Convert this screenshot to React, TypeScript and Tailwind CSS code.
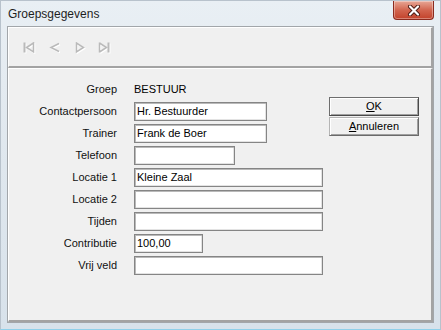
import React from "react"

const rows: { label: string; value?: string; width?: string; plain?: boolean }[] = [
  { label: "Groep", value: "BESTUUR", plain: true },
  { label: "Contactpersoon", value: "Hr. Bestuurder", width: "w-[133px]" },
  { label: "Trainer", value: "Frank de Boer", width: "w-[133px]" },
  { label: "Telefoon", value: "", width: "w-[101px]" },
  { label: "Locatie 1", value: "Kleine Zaal", width: "w-[189px]" },
  { label: "Locatie 2", value: "", width: "w-[189px]" },
  { label: "Tijden", value: "", width: "w-[189px]" },
  { label: "Contributie", value: "100,00", width: "w-[69px]" },
  { label: "Vrij veld", value: "", width: "w-[189px]" },
]

function NavIcon({ kind }: { kind: "first" | "prev" | "next" | "last" }) {
  const shape = (c: string, o: number) => {
    const t = `translate(${o} ${o})`
    if (kind === "first")
      return (
        <g transform={t} stroke={c} fill="none" strokeWidth="1.5">
          <path d="M1.5 0.5 V10.5" strokeWidth="2" />
          <path d="M10.5 1 L3.5 5.5 L10.5 10 Z" />
        </g>
      )
    if (kind === "prev")
      return (
        <g transform={t} stroke={c} fill="none" strokeWidth="1.5">
          <path d="M10 1.5 L2 5.5 L10 9.5" />
        </g>
      )
    if (kind === "next")
      return (
        <g transform={t} stroke={c} fill="none" strokeWidth="1.5">
          <path d="M1.5 1 V10 L8.5 5.5 Z" />
        </g>
      )
    return (
      <g transform={t} stroke={c} fill="none" strokeWidth="1.5">
        <path d="M1.5 0.5 V10.5 M1.5 1 L8.5 5.5 L1.5 10" />
        <path d="M10.5 0.5 V10.5" strokeWidth="2" />
      </g>
    )
  }
  return (
    <svg width="13" height="12" viewBox="0 0 13 12">
      {shape("#ffffff", 1)}
      {shape("#bababa", 0)}
    </svg>
  )
}

export default function App() {
  return (
    <div
      className="relative flex h-[330px] w-[441px] flex-col overflow-hidden border border-[#b8c2cc] border-b-[#8fd0ea] bg-gradient-to-b from-[#e9eff4] via-[#dfe7ee] to-[#d8e2eb] text-black"
      style={{ fontFamily: '"Liberation Sans", Arial, sans-serif' }}
    >
      {/* title bar */}
      <div className="flex h-[25px] shrink-0 items-start justify-between pl-[7px]">
        <span className="mt-[5px] text-[12px] leading-[16px] text-[#1e1e1e]">Groepsgegevens</span>
        <div className="mr-[6px] flex h-[19px] w-[41px] items-center justify-center rounded-b-[4px] border border-t-0 border-[#8b2b1e] bg-gradient-to-b from-[#e7a796] via-[#d2654f] to-[#c2412a] shadow-[inset_0_0_0_1px_rgba(255,255,255,0.35)]">
          <svg width="14" height="11" viewBox="0 0 14 11">
            <path d="M3 1.5 L11 9.5 M11 1.5 L3 9.5" stroke="#4a1a12" strokeWidth="4" strokeLinecap="round" />
            <path d="M3 1.5 L11 9.5 M11 1.5 L3 9.5" stroke="#ffffff" strokeWidth="2.2" strokeLinecap="round" />
          </svg>
        </div>
      </div>

      {/* client area */}
      <div className="mx-[6px] flex h-[297px] flex-col border border-[#a2a6aa] bg-[#f0f0f0] text-[11px]">
        {/* toolbar */}
        <div className="flex h-[41px] shrink-0 items-center border-l border-t border-white border-b-2 border-r-2 border-b-[#a3a3a3] border-r-[#a3a3a3] pl-[14px] pt-[2px]">
          <div className="flex w-[13px] justify-center"><NavIcon kind="first" /></div>
          <div className="ml-[13px] flex w-[13px] justify-center"><NavIcon kind="prev" /></div>
          <div className="ml-[13px] flex w-[13px] justify-center"><NavIcon kind="next" /></div>
          <div className="ml-[10px] flex w-[13px] justify-center"><NavIcon kind="last" /></div>
        </div>

        {/* body */}
        <div className="flex flex-1 items-start border-l border-t border-white border-b-2 border-r-2 border-b-[#a3a3a3] border-r-[#a3a3a3] pt-[11px]">
          <div className="grid grid-cols-[108px_189px] gap-x-[17px] gap-y-[3px]">
            {rows.map((r) => (
              <React.Fragment key={r.label}>
                <div className="flex h-[19px] items-center justify-end leading-[13px] text-[#111]">{r.label}</div>
                {r.plain ? (
                  <div className="flex h-[19px] items-center leading-[13px]">{r.value}</div>
                ) : (
                  <div
                    className={`flex h-[19px] items-center border border-[#858585] bg-white pl-[2px] leading-[13px] shadow-[inset_1px_1px_0_#b9b9b9,inset_-1px_-1px_0_#e3e3e3] ${r.width}`}
                  >
                    {r.value}
                  </div>
                )}
              </React.Fragment>
            ))}
          </div>

          <div className="ml-[6px] mt-[17px] flex w-[90px] flex-col gap-[1px]">
            <div className="flex h-[19px] items-center justify-center border border-[#6e6e6e] border-b-[#4a4a4a] border-r-[#4a4a4a] bg-[#f0f0f0] shadow-[inset_1px_1px_0_#ffffff,inset_-1px_-1px_0_#a0a0a0] leading-[13px]">
              <span><span className="underline">O</span>K</span>
            </div>
            <div className="flex h-[19px] items-center justify-center border border-[#b5b5b5] border-b-[#6a6a6a] border-r-[#6a6a6a] bg-[#f0f0f0] shadow-[inset_1px_1px_0_#ffffff,inset_-1px_-1px_0_#a0a0a0] leading-[13px]">
              <span><span className="underline">A</span>nnuleren</span>
            </div>
          </div>
        </div>
      </div>
    </div>
  )
}
